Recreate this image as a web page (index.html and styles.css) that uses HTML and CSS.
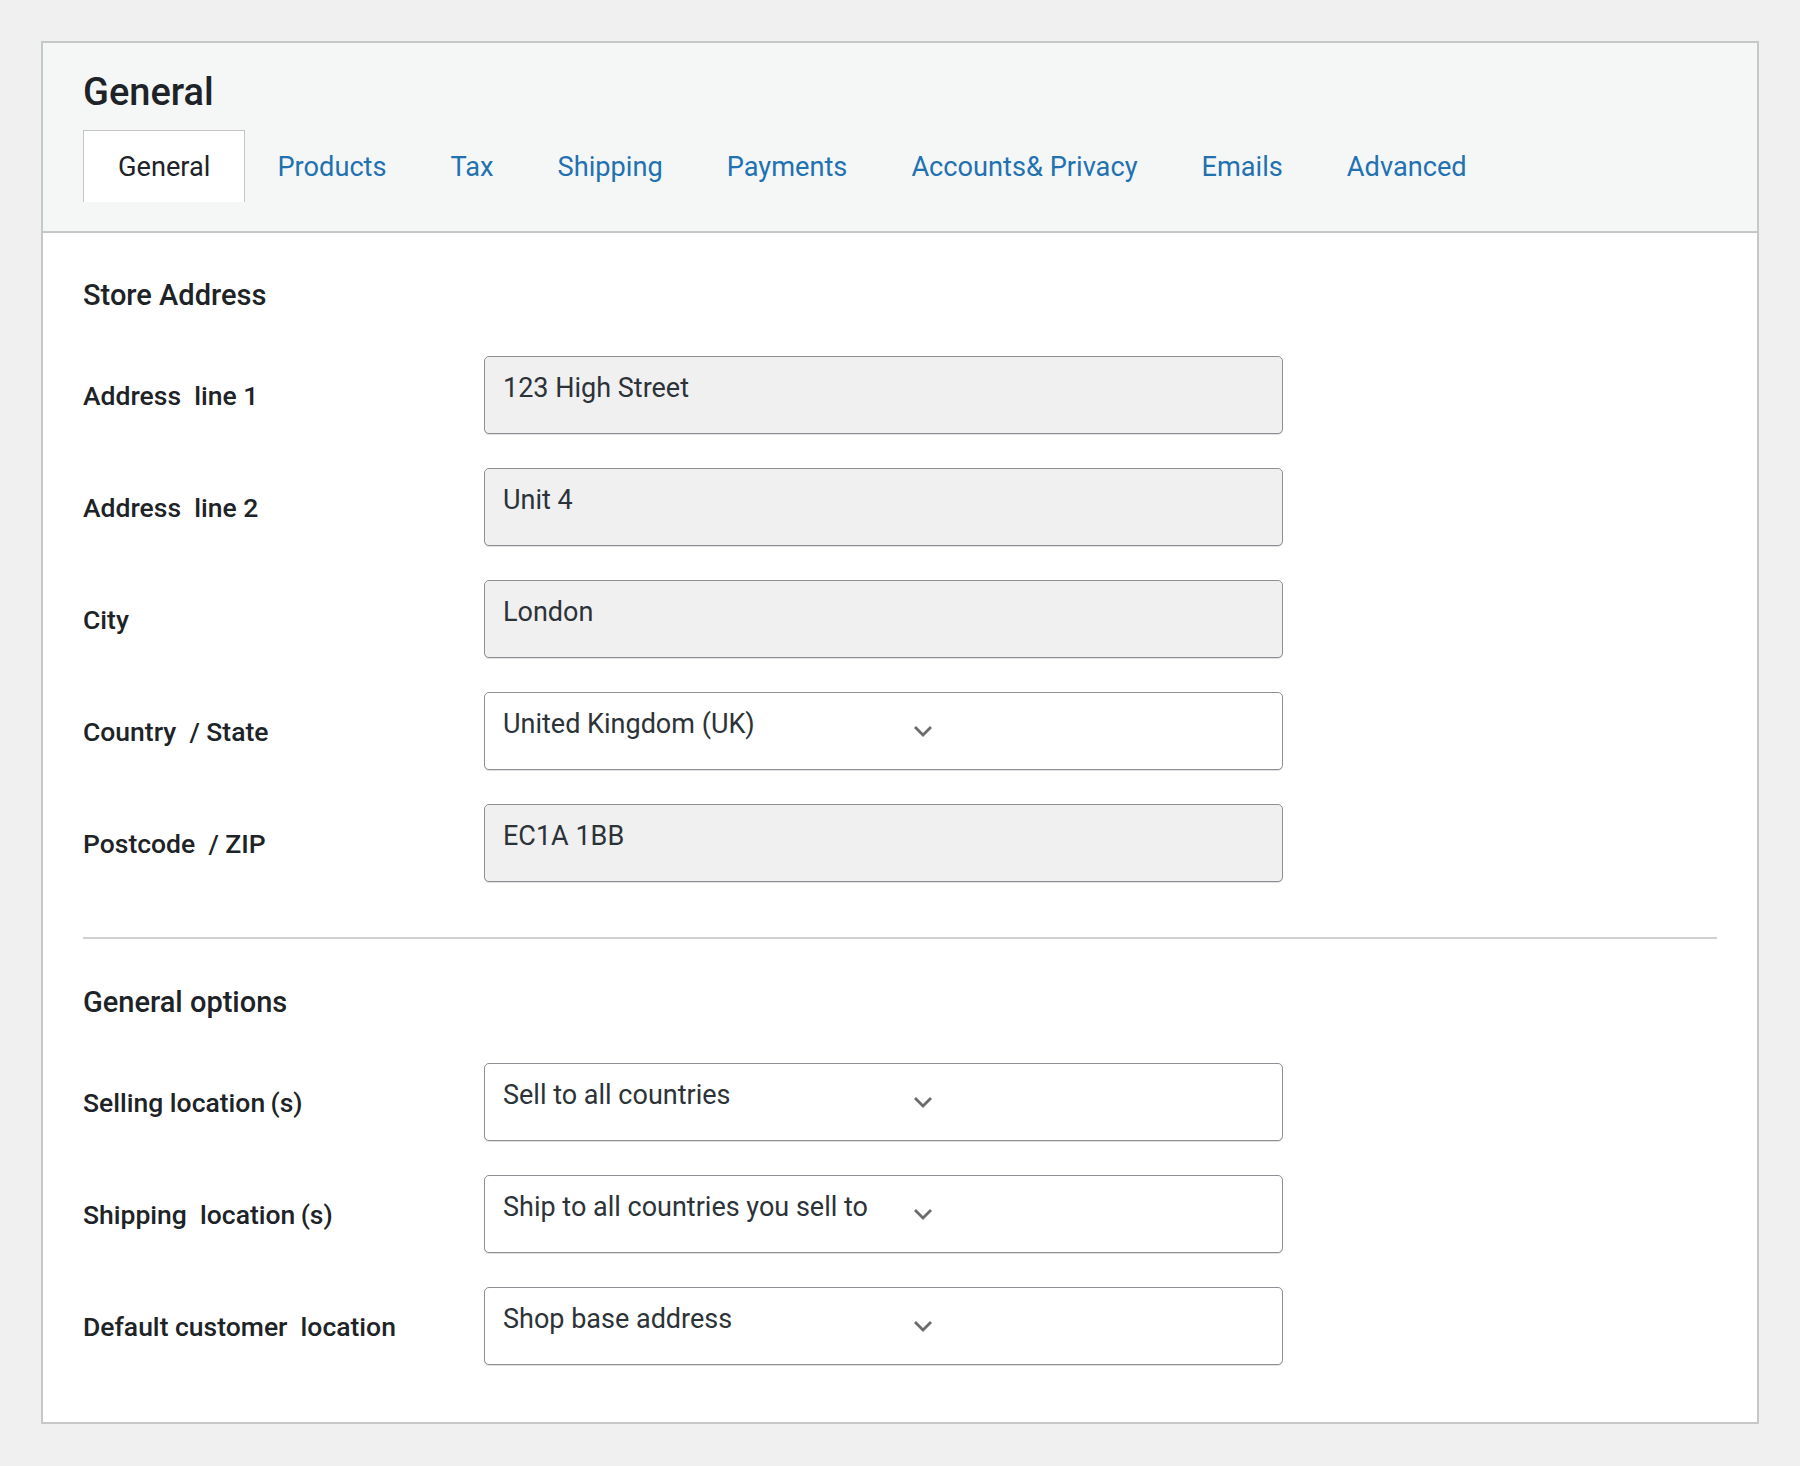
FILE: index.html
```html
<!DOCTYPE html>
<html>
    <head>
        <link rel="stylesheet" href="styles.css">
        <title>General Settings</title>
    </head>
    <body>
        <div class="panel">
            <div class="panel-header">
                <h1>General</h1>
                <ul class="tabs">
                    <li><a class="active" href="#">General</a></li>
                    <li><a href="#">Products</a></li>
                    <li><a href="#">Tax</a></li>
                    <li><a href="#">Shipping</a></li>
                    <li><a href="#">Payments</a></li>
                    <li><a href="#">Accounts&amp; Privacy</a></li>
                    <li><a href="#">Emails</a></li>
                    <li><a href="#">Advanced</a></li>
                </ul>
            </div>

            <div class="panel-body">
                <h2>Store Address</h2>
                <div class="form">
                    <div class="row">
                        <label>Address&nbsp; line 1</label>
                        <div class="field">123 High Street</div>
                    </div>
                    <div class="row">
                        <label>Address&nbsp; line 2</label>
                        <div class="field">Unit 4</div>
                    </div>
                    <div class="row">
                        <label>City</label>
                        <div class="field">London</div>
                    </div>
                    <div class="row">
                        <label>Country&nbsp; / State</label>
                        <div class="field select">
                            <span class="value">United Kingdom (UK)</span>
                            <svg class="chevron" width="20" height="12" viewBox="0 0 20 12"><path d="M2 2l8 8 8-8" fill="none" stroke="#6b6b6b" stroke-width="2.8"/></svg>
                        </div>
                    </div>
                    <div class="row">
                        <label>Postcode&nbsp; / ZIP</label>
                        <div class="field">EC1A 1BB</div>
                    </div>
                </div>

                <hr>

                <h2>General options</h2>
                <div class="form">
                    <div class="row">
                        <label>Selling location&thinsp;(s)</label>
                        <div class="field select">
                            <span class="value">Sell to all countries</span>
                            <svg class="chevron" width="20" height="12" viewBox="0 0 20 12"><path d="M2 2l8 8 8-8" fill="none" stroke="#6b6b6b" stroke-width="2.8"/></svg>
                        </div>
                    </div>
                    <div class="row">
                        <label>Shipping&nbsp; location&thinsp;(s)</label>
                        <div class="field select">
                            <span class="value">Ship to all countries you sell to</span>
                            <svg class="chevron" width="20" height="12" viewBox="0 0 20 12"><path d="M2 2l8 8 8-8" fill="none" stroke="#6b6b6b" stroke-width="2.8"/></svg>
                        </div>
                    </div>
                    <div class="row">
                        <label>Default customer&nbsp; location</label>
                        <div class="field select">
                            <span class="value">Shop base address</span>
                            <svg class="chevron" width="20" height="12" viewBox="0 0 20 12"><path d="M2 2l8 8 8-8" fill="none" stroke="#6b6b6b" stroke-width="2.8"/></svg>
                        </div>
                    </div>
                </div>
            </div>
        </div>
    </body>
</html>
```

FILE: styles.css
```css
html {
    height: 100%;
}
body {
    margin: 0px;
    padding: 41px;
    background-color: #f0f0f0;
    font-family: Roboto, "Liberation Sans", sans-serif;
    color: #1d2327;
}

.panel {
    border: 2px solid #c6c7c9;
    background-color: #fff;
}

.panel-header {
    background-color: #f5f7f7;
    padding: 27px 40px 29px;
    border-bottom: 2px solid #c6c7c9;
}

h1 {
    margin: 0px 0px 16px;
    font-size: 38px;
    line-height: 44px;
    font-weight: 500;
}

.tabs {
    list-style-type: none;
    margin: 0px;
    padding: 0px;
    display: flex;
}

.tabs a {
    display: block;
    height: 72px;
    line-height: 72px;
    padding: 0 31px;
    font-size: 27.2px;
    color: #2271b1;
    text-decoration: none;
    border: 1px solid transparent;
    border-bottom: 0px;
    box-sizing: border-box;
}

.tabs a.active {
    padding: 0 34px;
    background-color: #fff;
    color: #1d2327;
    border-color: #c3c4c7;
}

.panel-body {
    padding: 46px 40px 57px;
}

h2 {
    margin: 0px;
    font-size: 29px;
    line-height: 32px;
    font-weight: 500;
}

.form {
    display: flex;
    flex-direction: column;
    gap: 34px;
    margin-top: 45px;
}

.row {
    display: flex;
    align-items: center;
}

.row label {
    width: 401px;
    font-size: 26.5px;
    font-weight: 500;
}

.field {
    width: 799px;
    height: 78px;
    box-sizing: border-box;
    padding: 15px 18px;
    font-size: 27px;
    line-height: 32px;
    color: #2c3338;
    background-color: #f0f0f0;
    border: 1px solid #8c8f94;
    border-radius: 5px;
    box-shadow: 0 1px 0 rgba(0, 0, 0, 0.12);
}

.select {
    background-color: #fff;
    display: flex;
    align-items: center;
    padding-top: 0px;
    padding-bottom: 0px;
}

.select .value {
    width: 410px;
    align-self: flex-start;
    padding-top: 15px;
}

hr {
    border: 0px;
    border-top: 2px solid #d0d0d2;
    margin: 55px 0px 47px;
}
```
